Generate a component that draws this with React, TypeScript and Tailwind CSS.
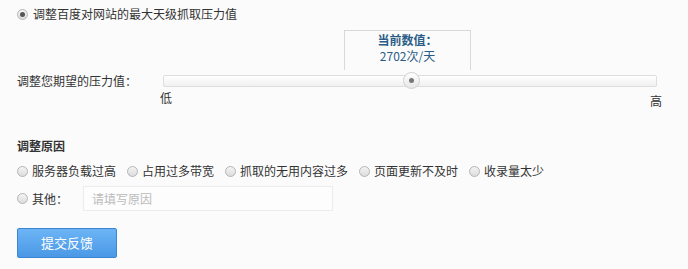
import React from "react";

const reasons = ["服务器负载过高", "占用过多带宽", "抓取的无用内容过多", "页面更新不及时", "收录量太少"];

function Radio({ checked = false }: { checked?: boolean }) {
    return (
        <span className="inline-flex h-[11px] w-[11px] shrink-0 items-center justify-center rounded-full border border-[#b5b5b5] bg-gradient-to-b from-[#f4f4f4] to-[#dcdcdc]">
            {checked && <span className="h-[5px] w-[5px] rounded-full bg-[#555]" />}
        </span>
    );
}

export default function App() {
    return (
        <div
            className="h-[269px] w-[688px] bg-[#fbfbfb] text-[12px] leading-[14px] text-[#333]"
            style={{ fontFamily: '"Noto Sans CJK SC", "Noto Sans", sans-serif' }}
        >
            <div className="flex items-center gap-[5px] pl-[17px] pt-[7px]">
                <Radio checked />
                <span>调整百度对网站的最大天级抓取压力值</span>
            </div>

            {/* current value box */}
            <div className="ml-[344px] mt-[9px] flex h-[40px] w-[127px] flex-col items-center border border-b-0 border-[#d8d8d8] pt-[2px]">
                <span className="font-bold text-[#2a5d86]">当前数值：</span>
                <span className="mt-[2px] text-[#2a5d86]">2702次/天</span>
            </div>

            <div className="mt-[5px] flex items-start pl-[17px]">
                <span className="mt-[-1px] w-[146px]">调整您期望的压力值：</span>
                <div className="flex w-[494px] flex-col">
                    <div className="relative h-[12px] rounded-[2px] border border-[#dedede] bg-gradient-to-b from-white to-[#f0f0f0]">
                        <span className="absolute left-[239px] top-[-4px] flex h-[17px] w-[17px] items-center justify-center rounded-full border border-[#d0d0d0] bg-gradient-to-b from-white to-[#e6e6e6]">
                            <span className="h-[5px] w-[5px] rounded-full bg-[#777]" />
                        </span>
                    </div>
                    <div className="mt-[4px] flex justify-between">
                        <span className="-ml-[3px]">低</span>
                        <span className="-mr-[5px] mt-[3px]">高</span>
                    </div>
                </div>
            </div>

            <div className="mt-[31px] pl-[17px] font-bold">调整原因</div>

            <div className="mt-[11px] flex items-center pl-[17px]">
                {reasons.map((r) => (
                    <label key={r} className="mr-[11px] flex items-center gap-[4px]">
                        <Radio />
                        <span>{r}</span>
                    </label>
                ))}
            </div>

            <div className="mt-[8px] flex items-center pl-[17px]">
                <label className="flex w-[66px] items-center gap-[4px]">
                    <Radio />
                    <span>其他：</span>
                </label>
                <div className="flex h-[25px] w-[250px] items-center border border-[#ececec] bg-[#fdfdfd] pl-[8px] text-[#bbb]">
                    请填写原因
                </div>
            </div>

            <button className="ml-[17px] mt-[17px] h-[30px] w-[100px] rounded-[2px] border border-[#3a86d0] bg-gradient-to-b from-[#6cb4f5] to-[#4a98e6] text-[13px] text-white">
                提交反馈
            </button>
        </div>
    );
}
